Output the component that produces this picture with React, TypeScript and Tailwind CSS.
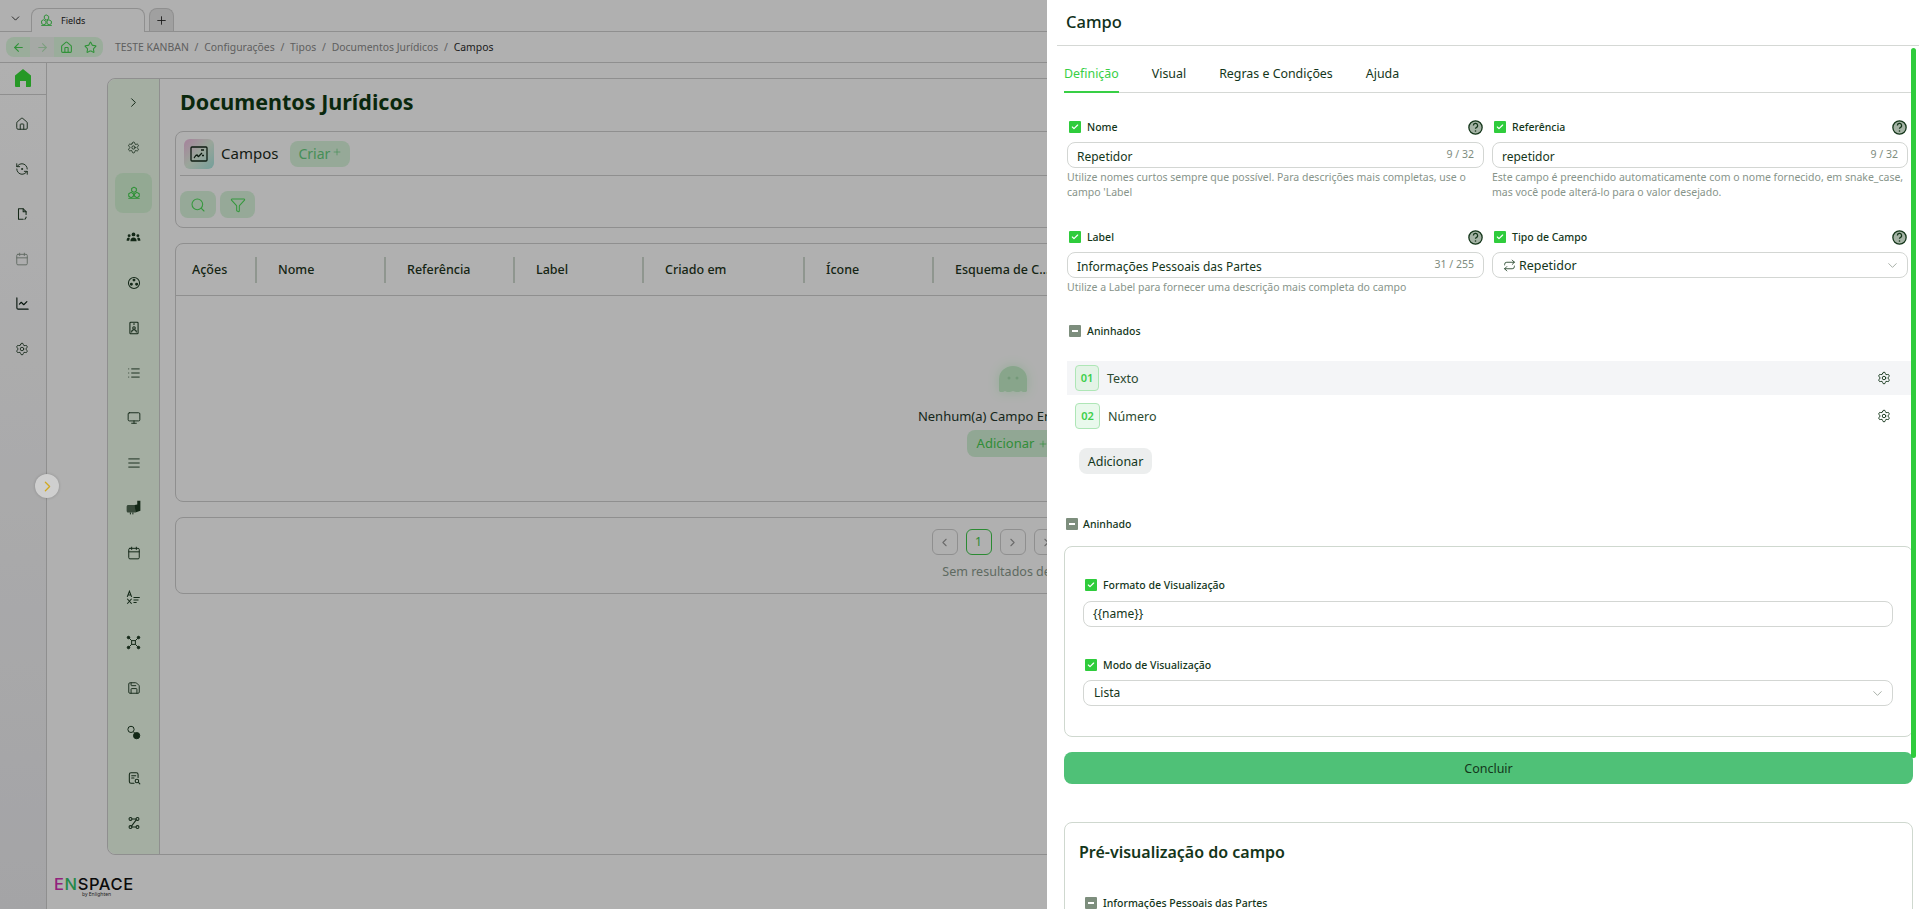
import type { ReactNode } from "react";
import {
  AlignJustify,
  ArrowLeft,
  ArrowRight,
  Calendar,
  ChartLine,
  ChevronDown,
  ChevronLeft,
  ChevronRight,
  Filter,
  House,
  List,
  Monitor,
  Plus,
  RefreshCcwDot,
  Repeat,
  Save,
  Search,
  Settings,
  Star,
  Check,
} from "lucide-react";

const FONT = "font-['Noto_Sans',sans-serif]";
const TXT = "text-[#14361a]";

const Svg = ({ children, size = 14 }: { children: ReactNode; size?: number }) => (
  <svg width={size} height={size} viewBox="0 0 24 24" fill="none" stroke="currentColor" strokeWidth="1.8" strokeLinecap="round" strokeLinejoin="round">
    {children}
  </svg>
);

const Trio = ({ size = 14 }: { size?: number }) => (
  <Svg size={size}>
    <path d="M12 2l4 2.3v4.4L12 11 8 8.7V4.3z" />
    <path d="M7 11l4 2.3v4.4L7 20l-4-2.3v-4.4z" />
    <path d="M17 11l4 2.3v4.4L17 20l-4-2.3v-4.4z" />
    <path d="M3 21h18" />
  </Svg>
);

const railIcons = [
  <House size={14} strokeWidth={1.6} />,
  <RefreshCcwDot size={14} strokeWidth={1.6} />,
  <Svg>
    <path d="M14 3H6v18h8M14 3l5 5v5M19 17v1l-2 3" />
    <path d="M14 3v5h5" />
  </Svg>,
  <Calendar size={14} strokeWidth={1.6} className="opacity-50" />,
  <ChartLine size={15} strokeWidth={1.8} className="text-[#0a1f14]" />,
  <Settings size={14} strokeWidth={1.5} />,
];

const sideIcons = [
  <ChevronRight size={15} strokeWidth={1.6} />,
  <Settings size={13} strokeWidth={1.5} />,
  <Trio />,
  <svg width="15" height="15" viewBox="0 0 24 24" fill="currentColor">
    <circle cx="12" cy="7" r="3" />
    <circle cx="5" cy="9" r="2.3" />
    <circle cx="19" cy="9" r="2.3" />
    <path d="M7 18c0-4 2-6 5-6s5 2 5 6zM1 17c0-3 1-5 4-5l1 1-1 4zM23 17c0-3-1-5-4-5l-1 1 1 4z" />
  </svg>,
  <Svg>
    <circle cx="12" cy="12" r="9.5" />
    <circle cx="12" cy="7" r="1.6" fill="currentColor" />
    <circle cx="7.5" cy="14" r="1.6" fill="currentColor" />
    <circle cx="16.5" cy="14" r="1.6" fill="currentColor" />
  </Svg>,
  <Svg>
    <rect x="5" y="2" width="14" height="20" rx="1.5" />
    <circle cx="12" cy="12" r="2.2" />
    <path d="M8 19c0-3 2-4 4-4s4 1 4 4M11 5h2" />
  </Svg>,
  <List size={14} strokeWidth={1.6} />,
  <Monitor size={14} strokeWidth={1.6} />,
  <AlignJustify size={14} strokeWidth={1.6} />,
  <svg width="15" height="15" viewBox="0 0 24 24" fill="currentColor">
    <path d="M1 11c0-2 1-3 3-3h11v12H4c-2 0-3-1-3-3z" opacity="0.75" />
    <path d="M14 8l4-1V1h5v16l-8 3z" />
    <path d="M7 20v3M11 20v3" stroke="currentColor" strokeWidth="1.6" fill="none" />
  </svg>,
  <Calendar size={14} strokeWidth={1.7} />,
  <svg width="15" height="15" viewBox="0 0 24 24" fill="none" stroke="currentColor" strokeWidth="1.7">
    <path d="M2 11l3.5-9L9 11M3.5 8h4M2 14l7 8M9 14l-7 8" />
    <path d="M12 12h10M12 16h8M12 20h5" />
  </svg>,
  <svg width="15" height="15" viewBox="0 0 24 24" fill="currentColor" stroke="currentColor" strokeWidth="1.6">
    <rect x="9" y="9" width="6" height="6" fill="none" />
    <path d="M5 5l4 4M19 5l-4 4M5 19l4-4M19 19l-4-4" fill="none" />
    <circle cx="4" cy="4" r="2" />
    <circle cx="20" cy="4" r="2" />
    <circle cx="4" cy="20" r="2" />
    <circle cx="20" cy="20" r="2" />
  </svg>,
  <Save size={14} strokeWidth={1.6} />,
  <svg width="15" height="15" viewBox="0 0 24 24" fill="none" stroke="currentColor" strokeWidth="1.6">
    <circle cx="8" cy="7" r="5" />
    <path d="M12 11l2 2" />
    <circle cx="17" cy="17" r="5" fill="currentColor" />
  </svg>,
  <Svg>
    <path d="M12 21H7a3 3 0 0 1-3-3V6a3 3 0 0 1 3-3h9a3 3 0 0 1 3 3v5" />
    <path d="M8 8h7M8 12h4" />
    <circle cx="17" cy="17" r="3" />
    <path d="M20 20l2 2" />
  </Svg>,
  <Svg>
    <circle cx="6" cy="5" r="2.5" />
    <circle cx="18" cy="5" r="2.5" />
    <circle cx="6" cy="19" r="2.5" />
    <circle cx="18" cy="19" r="2.5" />
    <path d="M8.5 5h7M15.5 7L8 17M8.5 19h7" />
  </Svg>,
];

const columns = [
  ["Ações", "w-[81px]"],
  ["Nome", "w-[129px]"],
  ["Referência", "w-[129px]"],
  ["Label", "w-[129px]"],
  ["Criado em", "w-[161px]"],
  ["Ícone", "w-[129px]"],
  ["Esquema de C...", "w-[140px]"],
];

const Tick = () => (
  <span className="flex h-3 w-3 shrink-0 items-center justify-center rounded-[1px] bg-[#2fcc3c] text-white">
    <Check size={8} strokeWidth={3.5} />
  </span>
);

const Minus = () => (
  <span className="flex h-3 w-3 shrink-0 items-center justify-center rounded-[1px] bg-[#7d8e7d]">
    <span className="h-[2px] w-[6px] bg-white" />
  </span>
);

const Help = () => (
  <svg width="15" height="15" viewBox="0 0 14 14" className="shrink-0">
    <circle cx="7" cy="7" r="6.2" fill="#a5b3a5" stroke="#14361a" strokeWidth="1.2" />
    <path d="M5 5.2A2 2 0 1 1 7.7 7.1c-.5.2-.7.5-.7 1.1" fill="none" stroke="#14361a" strokeWidth="1.2" />
    <circle cx="7" cy="10.2" r=".75" fill="#14361a" />
  </svg>
);

const FieldLabel = ({ text, help = true }: { text: string; help?: boolean }) => (
  <div className="flex h-[14px] items-center pl-[2px] pr-px">
    <Tick />
    <span className={`ml-[6px] mt-px flex-1 text-[10.5px] font-medium ${TXT}`}>{text}</span>
    {help && <Help />}
  </div>
);

const TextBox = ({ value, count }: { value: string; count: string }) => (
  <div className="mt-2 flex h-[26px] items-center justify-between rounded-lg border border-[#d3d6d3] pl-[9px] pr-[9px]">
    <span className={`mt-[3px] text-[12px] ${TXT}`}>{value}</span>
    <span className="text-[10.5px] text-[#7e8c7e]">{count}</span>
  </div>
);

const Hint = ({ children }: { children: ReactNode }) => (
  <p className="mt-[2px] text-[10.5px] leading-[15px] text-[#87948a]">{children}</p>
);

const NestedRow = ({ n, name, active }: { n: string; name: string; active?: boolean }) => (
  <div className={`flex h-[34px] items-center pl-2 pr-[21px] ${active ? "bg-[#f4f5f7]" : ""}`}>
    <span className={`flex h-[26px] items-center justify-center rounded-[4px] border border-[#aee6b6] text-[11px] font-semibold text-[#3ccf4a] ${active ? "w-6 bg-[#e3f3e6]" : "w-[25px] bg-[#e9f9ec]"}`}>
      {n}
    </span>
    <span className={`mt-[2px] flex-1 text-[12.5px] text-[#2c4a30] ${active ? "ml-2" : "ml-[8px]"}`}>{name}</span>
    <Settings size={14} strokeWidth={1.6} className="text-[#14361a]" />
  </div>
);

const Background = () => (
  <div className="flex h-full w-full flex-col bg-white">
    {/* tabs */}
    <div className="flex h-[32px] shrink-0 items-end border-b border-[#d0d0d0] pl-[9px]">
      <ChevronDown size={13} className="mb-[6px] mr-[9px] text-[#222]" strokeWidth={1.6} />
      <div className="-mb-px flex h-[24px] w-[114px] items-center gap-2 rounded-t-lg border border-b-0 border-[#d0d0d0] bg-white pl-2">
        <span className="text-[#3fd14c]">
          <Trio size={13} />
        </span>
        <span className="text-[9px] text-[#222]">Fields</span>
      </div>
      <div className="ml-[4px] flex h-[23px] w-[25px] items-center justify-center rounded-t-lg border border-b-0 border-[#d0d0d0] bg-[#e8e8e8]">
        <Plus size={13} strokeWidth={1.6} className="text-[#222]" />
      </div>
    </div>
    {/* breadcrumb */}
    <div className="flex h-[31px] shrink-0 items-center border-b border-[#d0d0d0] pl-[6px]">
      <div className="flex h-5 overflow-hidden rounded-lg text-[#46d452]">
        <span className="flex w-6 items-center justify-center bg-[#dffbe1]">
          <ArrowLeft size={13} />
        </span>
        <span className="flex w-6 items-center justify-center bg-[#f0f5f0] text-[#b4e5b8]">
          <ArrowRight size={13} />
        </span>
        <span className="flex w-6 items-center justify-center bg-[#dffbe1]">
          <House size={13} />
        </span>
        <span className="flex w-[25px] items-center justify-center bg-[#dffbe1]">
          <Star size={13} />
        </span>
      </div>
      <div className="ml-3 mt-px flex gap-[5.8px] text-[10.4px] text-[#8a8a8a]">
        <span>TESTE KANBAN</span>
        <span>/</span>
        <span>Configurações</span>
        <span>/</span>
        <span>Tipos</span>
        <span>/</span>
        <span>Documentos Jurídicos</span>
        <span>/</span>
        <span className="text-[#2b2b2b]">Campos</span>
      </div>
    </div>

    <div className="flex min-h-0 flex-1">
      {/* rail */}
      <aside className="w-[47px] shrink-0 border-r border-[#d0d0d0] bg-gradient-to-b from-white to-[#eeeef1]">
        <div className="flex h-[32px] items-center justify-center border-b border-[#d0d0d0] pb-px text-[#38dc38]">
          <svg width="16" height="18" viewBox="0 0 16 18" fill="currentColor">
            <path d="M8 0l8 6.5V17a1 1 0 0 1-1 1h-4v-6H5v6H1a1 1 0 0 1-1-1V6.5z" />
          </svg>
        </div>
        <div className="flex flex-col pt-[6px] text-[#1f3a24]">
          {railIcons.map((icon, i) => (
            <div key={i} className="flex h-[45px] items-center justify-center pr-[2px]">
              {icon}
            </div>
          ))}
        </div>
      </aside>

      <div className="flex min-w-0 flex-1 flex-col pl-[60px] pt-[15px]">
        <div className="flex h-[777px] w-[1760px] rounded-lg border border-[#d0d0d0]">
          {/* sub menu */}
          <nav className="flex w-[52px] shrink-0 flex-col rounded-l-lg border-r border-[#d0d0d0] bg-[#eefceb] pt-px text-[#1c3a22]">
            {sideIcons.map((icon, i) => (
              <div key={i} className="flex h-[45px] items-center justify-center">
                <span
                  className={`flex items-center justify-center ${i === 2 ? "h-10 w-[37px] rounded-lg bg-[#d6f5d6] text-[#3ed14a]" : ""}`}
                >
                  {icon}
                </span>
              </div>
            ))}
          </nav>

          <div className="flex min-w-0 flex-1 flex-col pl-[15px] pr-[16px]">
            <h1 className="ml-[5px] mt-[7px] text-[21.5px] leading-[32px] font-bold text-[#0f3a14]">Documentos Jurídicos</h1>

            <section className="mt-[13px] h-[97px] rounded-lg border border-[#d0d0d0] pl-[4px]">
              <div className="flex h-[44px] items-center border-b border-[#d0d0d0] pl-[4px]">
                <span className="flex h-[30px] w-[30px] items-center justify-center rounded-md bg-gradient-to-br from-[#f1bce2] via-[#dff0e0] to-[#a7e6e0] text-[#14281a]">
                  <svg width="18" height="16" viewBox="0 0 18 16" fill="none" stroke="currentColor" strokeWidth="1.3">
                    <rect x="1" y="1" width="16" height="14" rx="1" />
                    <path d="M4 12c1-1 1.500-3 3-3 .8 0 .6 1.500 1.500 1.500L12 7M11 4h3M12 9.500h2" />
                  </svg>
                </span>
                <span className="ml-[7px] text-[15px] text-[#1c2c20]">Campos</span>
                <span className="ml-[12px] flex h-[26px] w-[60px] items-center justify-center gap-[2px] rounded-lg bg-[#d9f5dc] text-[14px] text-[#66cf80]">
                  Criar
                  <Plus size={10} strokeWidth={1.6} className="-mt-1" />
                </span>
              </div>
              <div className="mt-[15px] flex gap-1 text-[#4fdc5a]">
                <span className="flex h-[27px] w-9 items-center justify-center rounded-lg bg-[#d9f5dc]">
                  <Search size={16} strokeWidth={1.6} />
                </span>
                <span className="flex h-[27px] w-[35px] items-center justify-center rounded-lg bg-[#d9f5dc]">
                  <Filter size={16} strokeWidth={1.6} />
                </span>
              </div>
            </section>

            <section className="mt-[15px] flex h-[259px] flex-col rounded-lg border border-[#d0d0d0]">
              <div className="flex h-[52px] shrink-0 items-center border-b border-[#d0d0d0]">
                {columns.map(([label, w], i) => (
                  <div key={label} className={`flex h-[26px] items-center ${w} ${i === 0 ? "pl-[16px]" : "pl-[21px]"} ${i < columns.length - 1 ? "border-r-2 border-[#cfdacf]" : ""}`}>
                    <span className="mt-[2px] whitespace-nowrap text-[12.5px] font-medium text-[#1e3520]">{label}</span>
                  </div>
                ))}
              </div>
              <div className="flex flex-1 flex-col items-center pt-[70px]">
                <svg width="28" height="27" viewBox="0 0 28 27" className="drop-shadow-[0_0_6px_#d5fcd9]">
                  <path d="M0 13a14 13 0 0 1 28 0v12l-1 1h-3l-2-1-2 1h-3l-3-1-3 1H8l-2-1-2 1H1l-1-1z" fill="#c5f0ca" />
                  <circle cx="10" cy="12" r="1.5" fill="#a9deb0" />
                  <circle cx="18" cy="12" r="1.5" fill="#a9deb0" />
                </svg>
                <p className="mt-[14px] text-[13px] leading-[18px] text-[#23382a]">Nenhum(a) Campo Encontrado</p>
                <span className="mt-[5px] flex h-[27px] items-center gap-1 rounded-lg bg-[#d3f2d7] px-[10px] text-[13px] text-[#47cd52]">
                  Adicionar
                  <Plus size={10} strokeWidth={1.6} />
                </span>
              </div>
            </section>

            <section className="mt-[15px] flex h-[77px] flex-col items-center rounded-lg border border-[#d0d0d0] pt-[11px]">
              <div className="flex gap-2 text-[#9c9c9c]">
                <span className="flex h-[26px] w-[26px] items-center justify-center rounded-md border border-[#d0d0d0]">
                  <ChevronLeft size={13} />
                </span>
                <span className="flex h-[26px] w-[26px] items-center justify-center rounded-md border border-[#3fc94b] text-[12px] text-[#3fc94b]">1</span>
                <span className="flex h-[26px] w-[26px] items-center justify-center rounded-md border border-[#d0d0d0]">
                  <ChevronRight size={13} />
                </span>
                <span className="flex h-[26px] w-[26px] items-center justify-center rounded-md border border-[#d0d0d0]">
                  <ChevronRight size={13} />
                </span>
                <span className="flex h-[26px] w-[26px] items-center justify-center rounded-md border border-[#d0d0d0]">
                  <ChevronRight size={13} />
                </span>
              </div>
              <p className="mt-[8px] text-[12.5px] text-[#8a9a8d]">Sem resultados de itens</p>
            </section>
          </div>
        </div>

        <div className="ml-[-53px] mt-[23px] leading-none">
          <div className="font-['Inter',sans-serif] text-[16.5px] font-medium leading-[13px] tracking-[0.6px] text-[#111]">
            <span className="text-[#d431b4]">E</span>
            <span className="text-[#35c76a]">N</span>
            SPACE
          </div>
          <div className="pl-[28px] text-[5px] leading-[7px] text-[#333]">by Enlighten</div>
        </div>
      </div>
    </div>
  </div>
);

const Panel = () => (
  <aside className={`absolute inset-y-0 right-0 w-[872px] overflow-hidden bg-white ${TXT}`}>
    <div className="ml-[10px] flex h-[46px] items-center border-b border-[#d5d8d5] pl-[9px] pb-[1px]">
      <h2 className="text-[16.5px] font-medium leading-none text-[#10301a]">Campo</h2>
    </div>

    <div className="pl-[17px] pr-[6px]">
      <div className="-mr-[3px] flex h-[47px] items-end gap-[33px] border-b border-[#d5d8d5] text-[12.4px]">
        <span className="-mb-px border-b-2 border-[#38cf45] pb-[8px] leading-[18px] text-[#38cf45]">Definição</span>
        <span className="pb-[9px] leading-[18px]">Visual</span>
        <span className="pb-[9px] leading-[18px]">Regras e Condições</span>
        <span className="pb-[9px] leading-[18px]">Ajuda</span>
      </div>

      <div className="mt-[27px] grid grid-cols-[417px_416px] grid-rows-[80px_auto] gap-x-2 gap-y-[30px] pl-[3px]">
        <div>
          <FieldLabel text="Nome" />
          <TextBox value="Repetidor" count="9 / 32" />
          <Hint>Utilize nomes curtos sempre que possível. Para descrições mais completas, use o campo 'Label</Hint>
        </div>
        <div>
          <FieldLabel text="Referência" />
          <TextBox value="repetidor" count="9 / 32" />
          <Hint>Este campo é preenchido automaticamente com o nome fornecido, em snake_case, mas você pode alterá-lo para o valor desejado.</Hint>
        </div>
        <div>
          <FieldLabel text="Label" />
          <TextBox value="Informações Pessoais das Partes" count="31 / 255" />
          <Hint>Utilize a Label para fornecer uma descrição mais completa do campo</Hint>
        </div>
        <div>
          <FieldLabel text="Tipo de Campo" />
          <div className="mt-2 flex h-[26px] items-center rounded-lg border border-[#d3d6d3] pl-[10px] pr-[7px]">
            <Repeat size={13} strokeWidth={1.5} />
            <span className="ml-[3px] mt-[2px] flex-1 text-[12.5px]">Repetidor</span>
            <ChevronDown size={15} strokeWidth={1.2} className="text-[#8b968b]" />
          </div>
        </div>
      </div>

      <div className="mt-[29px] flex h-[14px] items-center pl-[5px]">
        <Minus />
        <span className="ml-[6px] mt-px text-[10.5px] font-medium">Aninhados</span>
      </div>

      <div className="ml-[3px] mr-px mt-[23px] flex flex-col gap-1">
        <NestedRow n="01" name="Texto" active />
        <NestedRow n="02" name="Número" />
      </div>

      <button className="ml-[15px] mt-[15px] flex h-[26px] w-[73px] items-center justify-center rounded-lg bg-[#eceeee] pt-[2px] text-[12.5px]">
        Adicionar
      </button>

      <div className="mt-[43px] flex h-[14px] items-center pl-[2px]">
        <Minus />
        <span className="ml-[5px] mt-px text-[10.5px] font-medium">Aninhado</span>
      </div>

      <div className="mt-[15px] h-[191px] rounded-lg border border-[#cfd8cf] pl-[18px] pr-[19px] pt-[31px]">
        <FieldLabel text="Formato de Visualização" help={false} />
        <div className="mt-[9px] flex h-[26px] items-center rounded-lg border border-[#d3d6d3] pl-[9px] text-[12px]">{"{{name}}"}</div>
        <div className="mt-[31px]">
          <FieldLabel text="Modo de Visualização" help={false} />
        </div>
        <div className="mt-2 flex h-[26px] items-center justify-between rounded-lg border border-[#d3d6d3] pl-[10px] pr-[7px] text-[12px]">
          Lista
          <ChevronDown size={15} strokeWidth={1.2} className="text-[#8b968b]" />
        </div>
      </div>

      <button className="mt-[15px] flex h-[32px] w-full items-center justify-center rounded-lg bg-[#4fc177] pt-[2px] text-[12.5px]">Concluir</button>

      <div className="mt-[38px] h-[200px] rounded-lg border border-[#cfd8cf] pl-[14px] pt-[16px]">
        <h3 className="text-[16px] font-semibold leading-[26px]">Pré-visualização do campo</h3>
        <div className="ml-[6px] mt-[31px] flex h-[14px] items-center">
          <Minus />
          <span className="ml-[6px] mt-px text-[10.5px] font-medium">Informações Pessoais das Partes</span>
        </div>
      </div>
    </div>

    <span className="absolute right-[3px] top-[48px] h-[710px] w-[5px] rounded-[3px] bg-[#2fcc3c]" />
  </aside>
);

export default function App() {
  return (
    <div className={`relative h-[909px] w-[1919px] overflow-hidden ${FONT}`}>
      <Background />
      <div className="absolute inset-0 bg-black/[0.31]" />
      <button className="absolute left-[35px] top-[474px] flex h-6 w-6 items-center justify-center rounded-full bg-[#cfcfcf] text-[#d1a81f] shadow-[0_0_3px_rgba(0,0,0,0.2)]">
        <ChevronRight size={17} strokeWidth={1.8} />
      </button>
      <Panel />
    </div>
  );
}
